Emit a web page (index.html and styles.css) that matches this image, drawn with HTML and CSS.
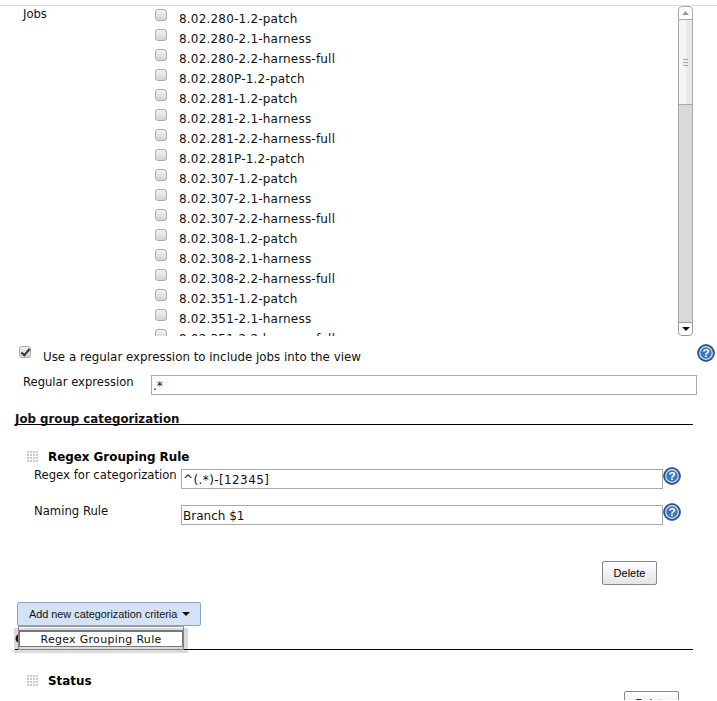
FILE: index.html
```html
<!DOCTYPE html>
<html lang="en">
<head>
<meta charset="utf-8">
<title>Edit View</title>
<link rel="stylesheet" href="styles.css">
</head>
<body>
<div class="page">
  <div class="jobs">
    <div class="jobs-label">Jobs</div>
    <div class="listbox">
      <div class="list">
        <label class="job"><input type="checkbox"><span>8.02.280-1.2-patch</span></label>
        <label class="job"><input type="checkbox"><span>8.02.280-2.1-harness</span></label>
        <label class="job"><input type="checkbox"><span>8.02.280-2.2-harness-full</span></label>
        <label class="job"><input type="checkbox"><span>8.02.280P-1.2-patch</span></label>
        <label class="job"><input type="checkbox"><span>8.02.281-1.2-patch</span></label>
        <label class="job"><input type="checkbox"><span>8.02.281-2.1-harness</span></label>
        <label class="job"><input type="checkbox"><span>8.02.281-2.2-harness-full</span></label>
        <label class="job"><input type="checkbox"><span>8.02.281P-1.2-patch</span></label>
        <label class="job"><input type="checkbox"><span>8.02.307-1.2-patch</span></label>
        <label class="job"><input type="checkbox"><span>8.02.307-2.1-harness</span></label>
        <label class="job"><input type="checkbox"><span>8.02.307-2.2-harness-full</span></label>
        <label class="job"><input type="checkbox"><span>8.02.308-1.2-patch</span></label>
        <label class="job"><input type="checkbox"><span>8.02.308-2.1-harness</span></label>
        <label class="job"><input type="checkbox"><span>8.02.308-2.2-harness-full</span></label>
        <label class="job"><input type="checkbox"><span>8.02.351-1.2-patch</span></label>
        <label class="job"><input type="checkbox"><span>8.02.351-2.1-harness</span></label>
        <label class="job"><input type="checkbox"><span>8.02.351-2.2-harness-full</span></label>
      </div>
      <div class="scrollbar">
        <div class="sb-btn sb-up"><svg width="7" height="4" viewBox="0 0 7 4"><path d="M3.500 0 7 4H0z" fill="#9a9a98"/></svg></div>
        <div class="sb-thumb"><i></i><i></i><i></i></div>
        <div class="sb-track"></div>
        <div class="sb-btn sb-down"><svg width="8" height="4" viewBox="0 0 8 4"><path d="M0 0h8L4 4z" fill="#111"/></svg></div>
      </div>
    </div>
  </div>

  <div class="use-regex">
    <label class="use-label"><input type="checkbox" class="checked" checked><span>Use a regular expression to include jobs into the view</span></label>
    <svg class="help" width="18" height="18" viewBox="0 0 20 20"><circle cx="10" cy="10" r="9.300" fill="#2b5a9c" stroke="#1d4a8a" stroke-width="1"/><circle cx="10" cy="10" r="7" fill="#3f74b8" stroke="#dbe6f4" stroke-width="1.300"/><text x="10" y="14.500" class="help-mark">?</text></svg>
  </div>

  <div class="regex-row">
    <div class="regex-label">Regular expression</div>
    <input class="field field-wide" type="text" value=".*">
  </div>

  <div class="section-head section-first">Job group categorization</div>

  <div class="block-head block-rule">
    <div class="grip"></div>
    <div class="block-title">Regex Grouping Rule</div>
  </div>
  <div class="rule-row rule-row-first">
    <div class="rule-label">Regex for categorization</div>
    <input class="field field-rule field-digits" type="text" value="^(.*)-[12345]">
    <svg class="help-small" width="18" height="18" viewBox="0 0 20 20"><circle cx="10" cy="10" r="9.300" fill="#2b5a9c" stroke="#1d4a8a" stroke-width="1"/><circle cx="10" cy="10" r="7" fill="#3f74b8" stroke="#dbe6f4" stroke-width="1.300"/><text x="10" y="14.500" class="help-mark">?</text></svg>
  </div>
  <div class="rule-row">
    <div class="rule-label">Naming Rule</div>
    <input class="field field-rule" type="text" value="Branch $1">
    <svg class="help-small" width="18" height="18" viewBox="0 0 20 20"><circle cx="10" cy="10" r="9.300" fill="#2b5a9c" stroke="#1d4a8a" stroke-width="1"/><circle cx="10" cy="10" r="7" fill="#3f74b8" stroke="#dbe6f4" stroke-width="1.300"/><text x="10" y="14.500" class="help-mark">?</text></svg>
  </div>
  <div class="delete-row"><button class="btn" type="button">Delete</button></div>

  <div class="add-wrap">
    <button class="btn-add" type="button">Add new categorization criteria<svg width="8" height="4" viewBox="0 0 8 4"><path d="M0 0h8L4 4z" fill="#111"/></svg></button>
    <div class="menu"><div class="menu-item">Regex Grouping Rule</div></div>
  </div>

  <div class="section-head section-second">Columns</div>
  <div class="block-head block-status">
    <div class="grip"></div>
    <div class="block-title">Status</div>
  </div>
  <div class="delete-row delete-status"><button class="btn" type="button">Delete</button></div>
</div>
</body>
</html>
```
FILE: styles.css
```css
html, body {
  margin: 0;
  padding: 0;
  height: 701px;
  overflow: hidden;
  background: #fff;
}
body {
  font-family: "DejaVu Sans", Verdana, sans-serif;
  font-size: 12px;
  color: #111;
}
.page {
  border-top: 1px solid transparent;
  height: 700px;
  overflow: hidden;
  box-sizing: border-box;
}
.jobs {
  margin-top: 4px;
  border-top: 1px solid #dcdcdc;
  display: flex;
  height: 331px;
}
.jobs-label {
  width: 150px;
  box-sizing: border-box;
  padding: 1px 0 0 23px;
  line-height: 14px;
  font-size: 11.6px;
}
.listbox {
  width: 543px;
  height: 330px;
  display: flex;
  overflow: hidden;
}
.list {
  flex: 1;
  overflow: hidden;
  padding: 3px 0 0 5px;
}
.job {
  display: flex;
  height: 20px;
  align-items: flex-start;
}
.job span {
  margin-left: 12px;
  line-height: 20px;
  letter-spacing: 0.2px;
}
input[type="checkbox"] {
  appearance: none;
  margin: 0;
  width: 12px;
  height: 12px;
  flex: none;
  border: 1px solid #aeaeae;
  border-radius: 3px;
  background: linear-gradient(#f2f2f2, #d4d4d4);
  box-sizing: border-box;
}
.scrollbar {
  width: 15px;
  display: flex;
  flex-direction: column;
  flex: none;
  box-sizing: border-box;
}
.sb-btn {
  height: 14px;
  border: 1px solid #a8a8a8;
  display: flex;
  align-items: center;
  justify-content: center;
  background: #fff;
  flex: none;
  box-sizing: border-box;
}
.sb-up { border-radius: 4px 4px 0 0; }
.sb-down { border-radius: 0 0 4px 4px; border-color: #999; }
.sb-thumb {
  height: 85px;
  flex: none;
  box-sizing: border-box;
  border: 1px solid #a8a8a8;
  border-top: 0;
  background: linear-gradient(90deg, #f6f5f3 55%, #e9e9e7 55%);
  display: flex;
  flex-direction: column;
  align-items: center;
  justify-content: center;
  gap: 2px;
}
.sb-thumb i {
  display: block;
  width: 5px;
  height: 1px;
  background: #a5a5a5;
}
.sb-track {
  flex: 1;
  background: #dad9d7;
  border: 1px solid #a8a8a8;
  border-width: 0 1px;
}
.use-regex {
  display: flex;
  align-items: flex-start;
  height: 29px;
  padding-left: 19px;
  margin-top: 9px;
}
.use-label {
  display: flex;
  align-items: flex-start;
  width: 678px;
}
.use-label span {
  margin-left: 12px;
  line-height: 14px;
  margin-top: 4px;
  font-size: 11.85px;
}
.checked {
  position: relative;
}
.checked::after {
  content: "";
  position: absolute;
  left: 3px;
  top: 0;
  width: 3px;
  height: 7px;
  border: solid #333;
  border-width: 0 2px 2px 0;
  transform: rotate(40deg);
}
.help {
  flex: none;
  margin-top: -2px;
}
.help-mark {
  font-family: "Liberation Sans", Arial, sans-serif;
  font-size: 13px;
  font-weight: 700;
  fill: #fff;
  text-anchor: middle;
}
.regex-row {
  display: flex;
  align-items: flex-start;
  height: 20px;
}
.regex-label {
  width: 151px;
  box-sizing: border-box;
  padding-left: 23px;
  line-height: 14px;
  font-size: 11.6px;
}
.field {
  box-sizing: border-box;
  height: 20px;
  padding: 2px 1px 0;
  margin: 0;
  border: 1px solid #a9a9a9;
  border-radius: 0;
  font: 12px "DejaVu Sans", Verdana, sans-serif;
  color: #111;
  background: #fff;
  outline: 0;
}
.field-wide { width: 546px; }
.field-rule { width: 482px; }
.field-digits { letter-spacing: 0.4px; }
.section-head {
  margin-left: 15px;
  width: 678px;
  border-bottom: 1px solid #000;
  font-weight: 700;
  line-height: 14px;
  font-size: 11.8px;
}
.section-first {
  margin-top: 16px;
  height: 11px;
  padding-top: 2px;
  box-sizing: content-box;
  line-height: 12px;
}
.block-head {
  display: flex;
  align-items: center;
  height: 14px;
  padding-left: 27px;
}
.block-rule { margin-top: 25px; }
.grip {
  width: 12px;
  height: 12px;
  flex: none;
  background-image: radial-gradient(circle at 1px 1px, #c8c8c8 1px, transparent 1px);
  background-size: 3px 3px;
}
.block-title {
  margin-left: 9px;
  font-size: 11.9px;
  font-weight: 700;
  color: #000;
}
.rule-row {
  display: flex;
  align-items: flex-start;
  height: 36px;
}
.rule-row-first { margin-top: 5px; }
.rule-label {
  width: 181px;
  box-sizing: border-box;
  padding-left: 34px;
  line-height: 14px;
  white-space: nowrap;
  margin-top: -1px;
  font-size: 11.65px;
}
.help-small {
  flex: none;
  margin-top: -2px;
}
.delete-row {
  display: flex;
  justify-content: flex-end;
  width: 657px;
  margin-top: 20px;
}
.btn {
  width: 55px;
  height: 24px;
  padding: 0;
  border: 1px solid #888;
  border-radius: 2px;
  background: linear-gradient(#fff, #e4e4e4);
  font: 11px "Liberation Sans", Arial, sans-serif;
  color: #000;
}
.add-wrap {
  position: relative;
  margin: 17px 0 0 17px;
  height: 24px;
}
.btn-add {
  box-sizing: border-box;
  width: 184px;
  height: 24px;
  padding: 0 0 0 11px;
  border: 1px solid #8aa5c8;
  border-radius: 2px;
  background: #d3e3f5;
  font: 10.85px "Liberation Sans", Arial, sans-serif;
  color: #111;
  display: flex;
  align-items: center;
  justify-content: flex-start;
  gap: 5px;
}
.menu {
  position: absolute;
  z-index: 1;
  left: 1px;
  top: 24px;
  width: 166px;
  height: 24px;
  box-sizing: border-box;
  border: 1px solid #999;
  background: #fff;
  padding: 3px 0 0;
}
.menu::before {
  content: "";
  position: absolute;
  z-index: -1;
  left: -5px;
  right: -5px;
  top: 1px;
  bottom: -4px;
  background: rgba(0, 0, 0, 0.14);
}
.menu-item {
  box-sizing: border-box;
  height: 17px;
  border: 1px solid #777;
  border-top-width: 2px;
  margin: 0;
  text-align: center;
  font-size: 11px;
  letter-spacing: 0.3px;
  line-height: 16px;
  background: #fff;
}
.section-second {
  margin-top: 6px;
  height: 17px;
}
.block-status { margin-top: 24px; }
.delete-status {
  width: 679px;
  margin-top: 3px;
}
```
